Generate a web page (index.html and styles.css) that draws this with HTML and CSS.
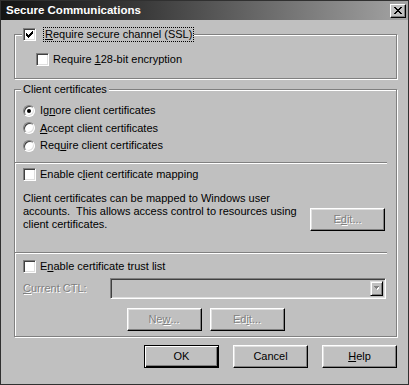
FILE: index.html
```html
<!DOCTYPE html>
<html>
<head>
	<meta charset="UTF-8">
	<title>Secure Communications</title>
	<link rel="stylesheet" href="styles.css">
</head>
<body>
	<div class="dialog">
		<!-- Caption -->
		<div class="titlebar">
			<span class="title">Secure Communications</span>
			<span class="close">
				<svg width="8" height="7" viewBox="0 0 8 7" shape-rendering="crispEdges">
					<path d="M0 0h2v1h-2zM6 0h2v1h-2zM1 1h2v1h-2zM5 1h2v1h-2zM2 2h4v1h-4zM3 3h2v1h-2zM2 4h4v1h-4zM1 5h2v1h-2zM5 5h2v1h-2zM0 6h2v1h-2zM6 6h2v1h-2z" fill="#000"/>
				</svg>
			</span>
		</div>

		<div class="content">
			<!-- SSL group -->
			<fieldset class="group ssl">
				<legend class="check-legend">
					<span class="box checked">
						<svg width="7" height="7" viewBox="0 0 7 7" shape-rendering="crispEdges">
							<path d="M6 0h1v3h-1zM5 1h1v3h-1zM4 2h1v3h-1zM3 3h1v3h-1zM2 4h1v3h-1zM1 3h1v3h-1zM0 2h1v3h-1z" fill="#000"/>
						</svg>
					</span>
					<span class="focus"><u>R</u>equire secure channel (SSL)</span>
				</legend>
				<div class="row sub">
					<span class="box"></span>
					<span>Require <u>1</u>28-bit encryption</span>
				</div>
			</fieldset>

			<!-- Client certificates group -->
			<fieldset class="group client">
				<legend class="text-legend">Client certificates</legend>
				<div class="radios">
					<div class="row radio-row"><span class="radio on"></span><span>Ig<u>n</u>ore client certificates</span></div>
					<div class="row radio-row"><span class="radio"></span><span><u>A</u>ccept client certificates</span></div>
					<div class="row radio-row"><span class="radio"></span><span>Req<u>u</u>ire client certificates</span></div>
				</div>

				<div class="sep"></div>

				<div class="mapping">
					<div class="row">
						<span class="box"></span>
						<span>Enable c<u>l</u>ient certificate mapping</span>
					</div>
					<div class="mapping-body">
						<p class="note">Client certificates can be mapped to Windows user<br>accounts.&nbsp; This allows access control to resources using<br>client certificates.</p>
						<span class="btn disabled map-edit">E<u>d</u>it...</span>
					</div>
				</div>

				<div class="sep"></div>

				<div class="ctl">
					<div class="row">
						<span class="box"></span>
						<span>E<u>n</u>able certificate trust list</span>
					</div>
					<div class="ctl-row">
						<span class="ctl-label disabled-text"><u>C</u>urrent CTL:</span>
						<span class="combo">
							<span class="combo-arrow">
								<svg width="5" height="4" viewBox="0 0 5 4" shape-rendering="crispEdges">
									<path d="M1 1h5v1h-1v1h-1v1h-1v-1h-1v-1h-1z" fill="#fff"/>
									<path d="M0 0h5v1h-1v1h-1v1h-1v-1h-1v-1h-1z" fill="#808080"/>
								</svg>
							</span>
						</span>
					</div>
					<div class="ctl-buttons">
						<span class="btn disabled">Ne<u>w</u>...</span>
						<span class="btn disabled">Ed<u>i</u>t...</span>
					</div>
				</div>
			</fieldset>

			<!-- Dialog buttons -->
			<div class="buttons">
				<span class="btn default">OK</span>
				<span class="btn">Cancel</span>
				<span class="btn"><u>H</u>elp</span>
			</div>
		</div>
	</div>
</body>
</html>
```

FILE: styles.css
```css
	body{
		margin: 0;
		background: #c0c0c0;
		font-family: "Liberation Sans", Arial, sans-serif;
		font-size: 11px;
		color: #000;
	}

	.dialog{
		width: 409px;
		height: 385px;
		box-sizing: border-box;
		border: 1px solid #303030;
		background: #c0c0c0;
	}

	/* caption */
	.titlebar{
		height: 19px;
		display: flex;
		align-items: center;
		padding: 0 2px 0 5px;
		background: linear-gradient(to right, #141414 0%, #3a3a3a 35%, #a4a4a4 100%);
	}

	.title{
		flex: 1;
		color: #fff;
		font-weight: bold;
		font-size: 11.5px;
		line-height: 13px;
	}

	.close{
		width: 16px;
		height: 14px;
		box-sizing: border-box;
		display: flex;
		align-items: center;
		justify-content: center;
		background: #c0c0c0;
		border: 1px solid;
		border-color: #fff #000 #000 #fff;
		box-shadow: inset -1px -1px 0 #808080;
	}

	.content{
		padding: 0 11px 0 13px;
	}

	/* group boxes */
	.group{
		margin: 0;
		padding: 0;
		min-width: 0;
		border: 1px solid #808080;
		box-shadow: 1px 1px 0 #fff, inset 1px 1px 0 #fff;
	}

	.group legend{
		background: #c0c0c0;
	}

	.ssl{
		margin-top: 7px;
		padding: 0 0 12px 0;
	}

	.check-legend{
		display: flex;
		align-items: center;
		margin-left: 7px;
		padding: 0 1px;
		height: 15px;
	}

	.focus{
		margin-left: 4px;
		padding: 0 1px;
		line-height: 13px;
		outline: 1px dotted #000;
	}

	.text-legend{
		margin-left: 6px;
		padding: 0 2px;
		line-height: 13px;
	}

	.client{
		margin-top: 4px;
		padding: 0;
	}

	.row{
		display: flex;
		align-items: center;
		height: 13px;
		line-height: 13px;
	}

	.box{
		width: 13px;
		height: 13px;
		box-sizing: border-box;
		flex: none;
		display: flex;
		align-items: center;
		justify-content: center;
		margin-right: 4px;
		background: #fff;
		border: 1px solid;
		border-color: #808080 #fff #fff #808080;
		box-shadow: inset 1px 1px 0 #404040, inset -1px -1px 0 #dfdfdf;
	}

	.sub{
		margin: 11px 0 0 21px;
	}

	/* radios */
	.radios{
		padding: 6px 0 0 8px;
	}

	.radio-row{
		height: 17.5px;
	}

	.radio{
		position: relative;
		width: 12px;
		height: 12px;
		box-sizing: border-box;
		flex: none;
		margin-right: 5px;
		border-radius: 50%;
		background: #fff;
		border: 1px solid;
		border-color: #808080 #fff #fff #808080;
		box-shadow: inset 1px 1px 0 #404040, inset -1px -1px 0 #dfdfdf;
	}

	.radio.on::after{
		content: "";
		position: absolute;
		left: 3px;
		top: 3px;
		width: 4px;
		height: 4px;
		border-radius: 50%;
		background: #000;
	}

	.sep{
		height: 1px;
		margin: 7px 9px 0 0;
		background: #808080;
		border-bottom: 1px solid #fff;
	}

	.mapping{
		padding: 4px 11px 0 8px;
	}

	.mapping-body{
		display: flex;
		align-items: flex-start;
	}

	.note{
		margin: 11px 0 0 0;
		line-height: 13px;
	}

	.map-edit{
		margin: 27px 0 0 auto;
	}

	.mapping + .sep{
		margin-top: 21px;
	}

	.ctl{
		padding: 6px 0 5px 8px;
	}

	.ctl-row{
		display: flex;
		align-items: center;
		margin-top: 5px;
	}

	.ctl-label{
		width: 87px;
	}

	.combo{
		width: 276px;
		height: 21px;
		box-sizing: border-box;
		display: flex;
		justify-content: flex-end;
		align-items: stretch;
		padding: 2px;
		border: 1px solid;
		border-color: #808080 #fff #fff #808080;
		box-shadow: inset 1px 1px 0 #404040, inset -1px -1px 0 #dfdfdf;
	}

	.combo-arrow{
		width: 13px;
		box-sizing: border-box;
		display: flex;
		align-items: center;
		justify-content: center;
		border: 1px solid;
		border-color: #dfdfdf #000 #000 #dfdfdf;
		box-shadow: inset 1px 1px 0 #fff, inset -1px -1px 0 #808080;
	}

	.ctl-buttons{
		display: flex;
		justify-content: center;
		gap: 8px;
		margin: 9px 0 0 -8px;
	}

	/* buttons */
	.btn{
		width: 75px;
		height: 23px;
		box-sizing: border-box;
		display: flex;
		align-items: center;
		justify-content: center;
		border: 1px solid;
		border-color: #fff #000 #000 #fff;
		box-shadow: inset -1px -1px 0 #808080, inset 1px 1px 0 #dfdfdf;
	}

	.btn.default{
		border-color: #000;
		box-shadow: inset 1px 1px 0 #fff, inset -1px -1px 0 #000, inset -2px -2px 0 #808080;
	}

	.disabled,
	.disabled-text{
		color: #808080;
		text-shadow: 1px 1px 0 #fff;
	}

	.buttons{
		display: flex;
		justify-content: flex-end;
		gap: 14px;
		margin-top: 8px;
	}
```
